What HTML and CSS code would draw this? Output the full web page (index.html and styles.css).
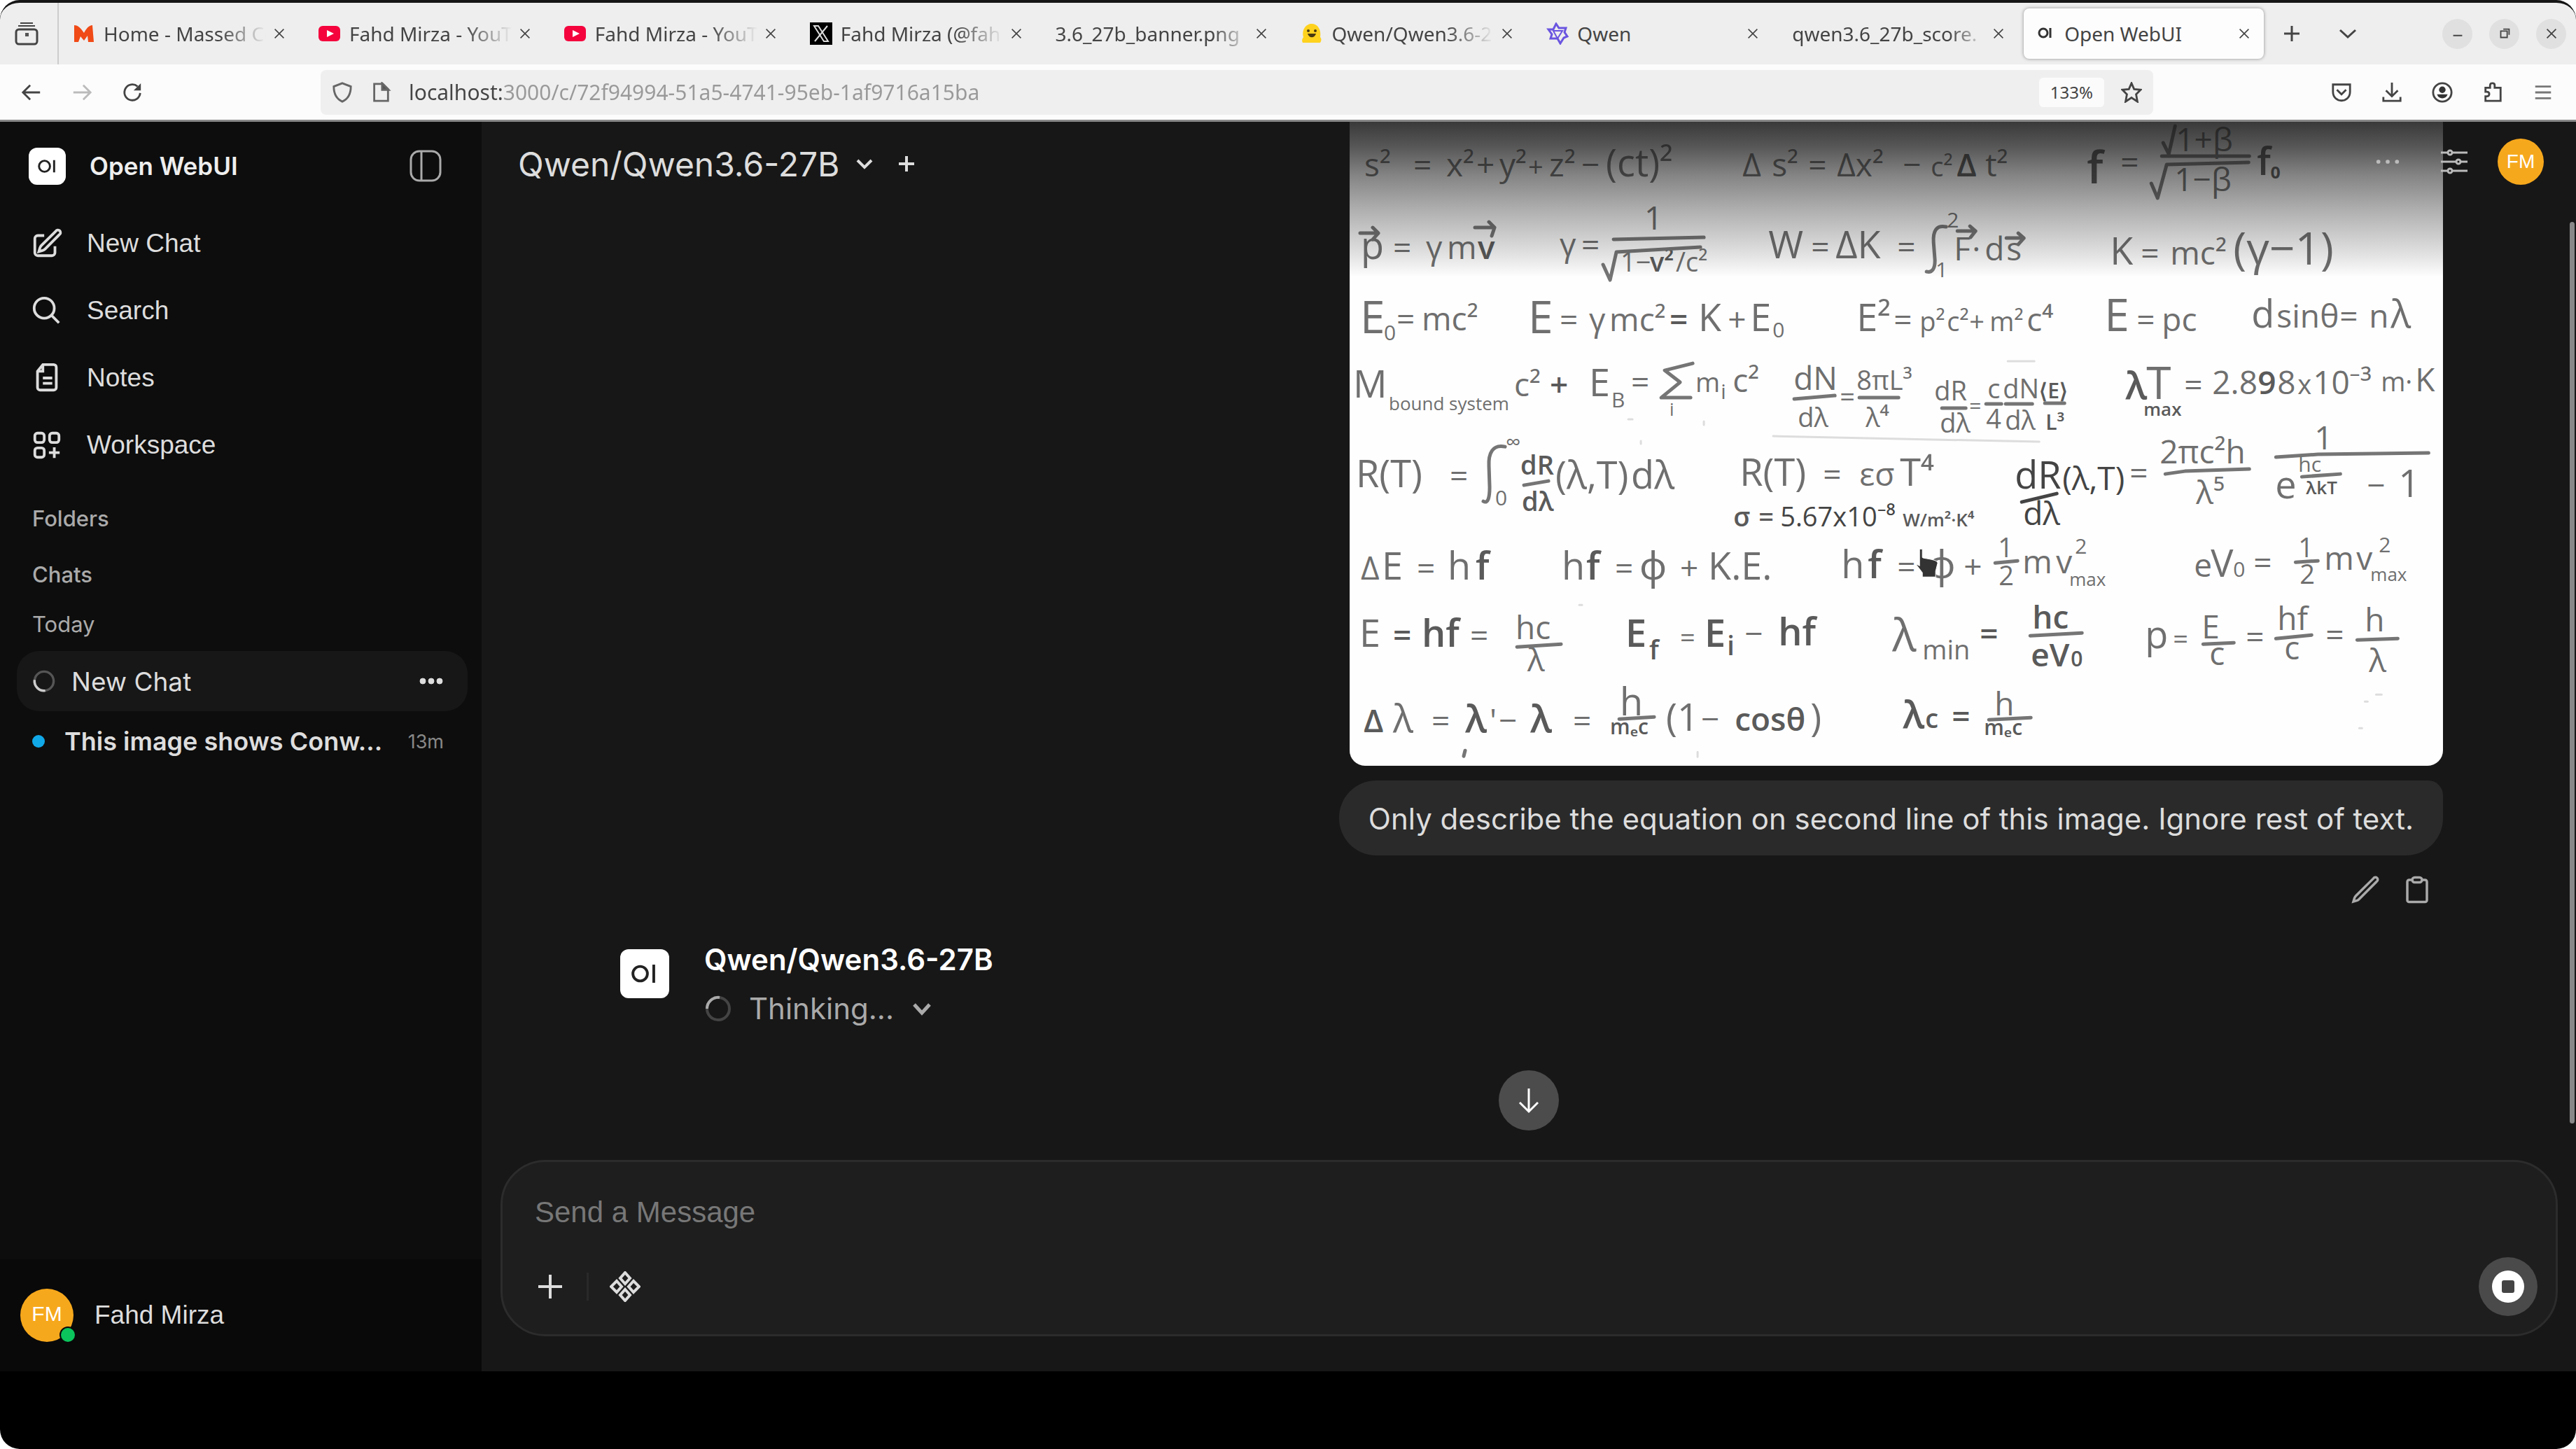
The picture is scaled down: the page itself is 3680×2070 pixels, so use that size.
FILE: index.html
```html
<!DOCTYPE html>
<html lang="en">
<head>
  <meta charset="UTF-8">
  <meta name="viewport" content="width=device-width, initial-scale=1.0">
  <title>Open WebUI</title>
  <link rel="stylesheet" href="styles.css">
</head>
<body>
  <div class="window">

    <!-- Tab strip -->
    <div class="tab-bar">
      <button class="firefox-view" aria-label="View recent browsing">
        <svg width="36" height="36" viewBox="0 0 36 36" fill="none" stroke="#555" stroke-width="3"><rect x="3" y="12" width="30" height="21" rx="4"/><path d="M6 7h24M9 3h18" stroke-width="2"/><rect x="16" y="17" width="5" height="5" fill="#555" stroke="none"/></svg>
      </button>
      <div class="tabs">
        <div class="tab">
          <svg class="favicon" viewBox="0 0 32 32"><path d="M2 4c6 0 9 4 14 11 3-6 7-11 12-11l2 24h-8l-1-9-5 7-5-6-3 8H2z" fill="#f04a16"/></svg>
          <span class="tab-title fade">Home - Massed Co</span>
          <button class="tab-close" aria-label="Close tab"><svg viewBox="0 0 20 20"><path d="M2 2l16 16M18 2L2 18"/></svg></button>
        </div>
        <div class="tab">
          <svg class="favicon" viewBox="0 0 32 32"><rect y="5" width="31" height="22" rx="6" fill="#f4033d"/><path d="M12 11l10 5-10 5z" fill="#fff"/></svg>
          <span class="tab-title fade">Fahd Mirza - YouT</span>
          <button class="tab-close" aria-label="Close tab"><svg viewBox="0 0 20 20"><path d="M2 2l16 16M18 2L2 18"/></svg></button>
        </div>
        <div class="tab">
          <svg class="favicon" viewBox="0 0 32 32"><rect y="5" width="31" height="22" rx="6" fill="#f4033d"/><path d="M12 11l10 5-10 5z" fill="#fff"/></svg>
          <span class="tab-title fade">Fahd Mirza - YouT</span>
          <button class="tab-close" aria-label="Close tab"><svg viewBox="0 0 20 20"><path d="M2 2l16 16M18 2L2 18"/></svg></button>
        </div>
        <div class="tab">
          <svg class="favicon" viewBox="0 0 32 32"><rect width="32" height="32" fill="#000"/><path d="M6 5h6l14 22h-6zM25 5L7 27" fill="none" stroke="#ddd" stroke-width="2"/></svg>
          <span class="tab-title fade">Fahd Mirza (@fah</span>
          <button class="tab-close" aria-label="Close tab"><svg viewBox="0 0 20 20"><path d="M2 2l16 16M18 2L2 18"/></svg></button>
        </div>
        <div class="tab">
          <span class="tab-title fade late">3.6_27b_banner.png</span>
          <button class="tab-close" aria-label="Close tab"><svg viewBox="0 0 20 20"><path d="M2 2l16 16M18 2L2 18"/></svg></button>
        </div>
        <div class="tab">
          <svg class="favicon" viewBox="0 0 32 32"><path d="M3 29c-2-4 0-6 1-8C1 10 8 2 16 2s14 8 12 19c2 2 2 5 0 8z" fill="#ffd21e"/><path d="M10 16c2 7 10 7 12 0z" fill="#4a3a10"/><circle cx="11" cy="12" r="2" fill="#4a3a10"/><circle cx="21" cy="12" r="2" fill="#4a3a10"/></svg>
          <span class="tab-title fade">Qwen/Qwen3.6-2</span>
          <button class="tab-close" aria-label="Close tab"><svg viewBox="0 0 20 20"><path d="M2 2l16 16M18 2L2 18"/></svg></button>
        </div>
        <div class="tab">
          <svg class="favicon" viewBox="0 0 32 32"><g fill="none" stroke="#6a55e0" stroke-width="3"><path d="M14 2l4 6h10l-2 6 4 6-5 2-5 8-4-7H6l2-6-5-7h7z"/><path d="M10 12h13l-7 11zM10 12l6 11" stroke-width="2"/></g></svg>
          <span class="tab-title">Qwen</span>
          <button class="tab-close" aria-label="Close tab"><svg viewBox="0 0 20 20"><path d="M2 2l16 16M18 2L2 18"/></svg></button>
        </div>
        <div class="tab">
          <span class="tab-title fade late">qwen3.6_27b_score.</span>
          <button class="tab-close" aria-label="Close tab"><svg viewBox="0 0 20 20"><path d="M2 2l16 16M18 2L2 18"/></svg></button>
        </div>
        <div class="tab active">
          <svg class="favicon small" viewBox="0 0 26 32"><g fill="none" stroke="#333" stroke-width="3"><circle cx="8" cy="15" r="6"/><path d="M18 8v14"/></g></svg>
          <span class="tab-title">Open WebUI</span>
          <button class="tab-close" aria-label="Close tab"><svg viewBox="0 0 20 20"><path d="M2 2l16 16M18 2L2 18"/></svg></button>
        </div>
      </div>
      <button class="strip-button" aria-label="New tab"><svg viewBox="0 0 28 28"><path d="M14 3v22M3 14h22"/></svg></button>
      <button class="strip-button" aria-label="List all tabs"><svg viewBox="0 0 28 28"><path d="M3 9l11 10L25 9"/></svg></button>
      <div class="window-controls">
        <button aria-label="Minimize"><svg viewBox="0 0 24 24"><path d="M5 15h14"/></svg></button>
        <button aria-label="Restore"><svg viewBox="0 0 24 24"><path d="M6 8h10v10H6zM10 5h9v9"/></svg></button>
        <button aria-label="Close"><svg viewBox="0 0 24 24"><path d="M5 5l14 14M19 5L5 19"/></svg></button>
      </div>
    </div>

    <!-- Navigation toolbar -->
    <div class="toolbar">
      <div class="history">
        <button aria-label="Back"><svg viewBox="0 0 32 32"><path d="M29 16H4M14 5L3 16l11 11"/></svg></button>
        <button class="disabled" aria-label="Forward" disabled><svg viewBox="0 0 32 32"><path d="M3 16h25M18 5l11 11-11 11"/></svg></button>
        <button aria-label="Reload"><svg viewBox="0 0 32 32"><path d="M28 17a12 12 0 1 1-4-10"/><path d="M29 2v11H18z" fill="#444" stroke="none"/></svg></button>
      </div>
      <div class="url-bar">
        <svg class="url-icon" viewBox="0 0 32 32"><path d="M16 2l13 5c0 11-4 19-13 23C7 26 3 18 3 7z"/></svg>
        <svg class="url-icon" viewBox="0 0 32 32"><path d="M6 3h13l8 8v18H6z"/><path d="M18 2v10h10z" fill="#555"/></svg>
        <input class="url-input" type="text" aria-label="Address" value="localhost:3000/c/72f94994-51a5-4741-95eb-1af9716a15ba">
        <button class="zoom-level">133%</button>
        <button class="star" aria-label="Bookmark this page"><svg viewBox="0 0 32 32"><path d="M16 2l4 9 10 1-7 7 2 11-9-6-9 6 2-11-7-7 10-1z"/></svg></button>
      </div>
      <div class="extensions">
        <button aria-label="Save to Pocket"><svg viewBox="0 0 32 32"><path d="M3 4h26v11c0 18-26 18-26 0zM9 12l7 7 7-7"/></svg></button>
        <button aria-label="Downloads"><svg viewBox="0 0 32 32"><path d="M16 1v20M7 13l9 9 9-9M3 23v6h26v-6"/></svg></button>
        <button aria-label="Account"><svg viewBox="0 0 32 32"><circle cx="16" cy="16" r="14"/><circle cx="16" cy="12" r="5" fill="#333" stroke="none"/><path d="M8 19h16c-2 8-14 8-16 0z" fill="#333" stroke="none"/></svg></button>
        <button aria-label="Extensions"><svg viewBox="0 0 32 32"><path d="M5 9h7V5c0-4 7-4 7 0v4h9v20H5v-7h2c5 0 5-7 0-7H5z"/></svg></button>
        <button class="menu-button" aria-label="Menu"><svg viewBox="0 0 32 32"><path d="M4 7h24M4 16h24M4 25h24"/></svg></button>
      </div>
    </div>

    <div class="app">
      <!-- Sidebar -->
      <aside class="sidebar">
        <div class="sidebar-header">
          <span class="logo"><svg viewBox="0 0 54 54"><circle cx="23" cy="27" r="8"/><path d="M37 18v18"/></svg></span>
          <span class="brand">Open WebUI</span>
          <button class="toggle" aria-label="Toggle sidebar"><svg viewBox="0 0 48 48"><rect x="3" y="3" width="42" height="42" rx="12"/><path d="M18 3v42"/></svg></button>
        </div>

        <nav class="menu">
          <a href="#"><svg viewBox="0 0 24 24"><path d="M16.9 4.5l1.7-1.7a1.9 1.9 0 1 1 2.6 2.6L10.6 16.1a4.5 4.5 0 0 1-1.9 1.1L6 18l.8-2.7a4.5 4.5 0 0 1 1.1-1.9zM18 14v4.8a2.2 2.2 0 0 1-2.2 2.2H5.2A2.2 2.2 0 0 1 3 18.8V8.2A2.2 2.2 0 0 1 5.2 6H10"/></svg>New Chat</a>
          <a href="#"><svg viewBox="0 0 24 24"><circle cx="10" cy="10" r="7.500"/><path d="M15.500 15.500L21 21"/></svg>Search</a>
          <a href="#"><svg viewBox="0 0 24 24"><path d="M9 2h8a2 2 0 0 1 2 2v15a2 2 0 0 1-2 2H7a2 2 0 0 1-2-2V7zM9 2v5H5M9 12h7M9 16h7"/></svg>Notes</a>
          <a href="#"><svg viewBox="0 0 24 24"><rect x="3" y="3" width="7" height="7" rx="2"/><rect x="14" y="3" width="7" height="7" rx="2"/><rect x="3" y="14" width="7" height="7" rx="2"/><path d="M17.500 13.500v8M13.500 17.500h8"/></svg>Workspace</a>
        </nav>

        <h2 class="section-title">Folders</h2>
        <h2 class="section-title">Chats</h2>
        <h3 class="section-day">Today</h3>
        <div class="chat-list">
          <div class="chat-item selected">
            <svg class="spinner" viewBox="0 0 40 40"><circle cx="20" cy="20" r="16" stroke="#555"/><path d="M4 18a16 16 0 0 0 18 18" stroke="#ccc"/></svg>
            <a href="#">New Chat</a>
            <button aria-label="Chat menu"><svg viewBox="0 0 36 12"><circle cx="6" cy="6" r="4"/><circle cx="18" cy="6" r="4"/><circle cx="30" cy="6" r="4"/></svg></button>
          </div>
          <div class="chat-item unread">
            <span class="unread-dot"></span>
            <a href="#">This image shows Conw...</a>
            <time>13m</time>
          </div>
        </div>

        <button class="user">
          <span class="avatar large">FM<span class="online"></span></span>
          Fahd Mirza
        </button>
      </aside>

      <!-- Conversation -->
      <main class="main">
        <header class="chat-header">
          <button class="model">Qwen/Qwen3.6-27B
            <svg viewBox="0 0 28 28"><path d="M4 9l10 10L24 9"/></svg>
          </button>
          <button class="add-model" aria-label="Add model"><svg viewBox="0 0 28 28"><path d="M14 3v22M3 14h22"/></svg></button>
          <div class="header-actions">
            <button aria-label="More"><svg viewBox="0 0 40 40" class="dots"><circle cx="6" cy="20" r="3"/><circle cx="20" cy="20" r="3"/><circle cx="34" cy="20" r="3"/></svg></button>
            <button aria-label="Controls"><svg viewBox="0 0 40 40"><path d="M1 7h10M17 7h22M1 20h22M29 20h10M1 33h10M17 33h22"/><circle cx="14" cy="7" r="3"/><circle cx="26" cy="20" r="3"/><circle cx="14" cy="33" r="3"/></svg></button>
            <button class="avatar" aria-label="User menu">FM</button>
          </div>
        </header>

        <section class="conversation">
          <div class="message user-message">
            <svg class="attachment" viewBox="0 0 1562 920" role="img" aria-label="Handwritten equations">
              <rect width="1562" height="920" fill="#fefefe"/>

              <!-- interval, doppler shift -->
              <g class="eq">
                <text y="78"><tspan x="21">s²</tspan><tspan x="91">=</tspan><tspan x="138">x²</tspan><tspan x="181">+</tspan><tspan x="214">y²</tspan><tspan x="255" class="m">+</tspan><tspan x="285">z²</tspan><tspan x="331">−</tspan><tspan x="366" class="l">(ct)²</tspan></text>
                <text y="78"><tspan x="561">Δ</tspan><tspan x="603">s²</tspan><tspan x="655">=</tspan><tspan x="696">Δx²</tspan><tspan x="790">−</tspan><tspan x="830" class="m">c²</tspan><tspan x="867" class="b">Δ</tspan><tspan x="908">t²</tspan></text>
                <text y="88" x="1053" class="xl b">f</text>
                <text y="74" x="1101">=</text>
                <text y="42" x="1180">1+β</text>
                <text y="99" x="1178">1−β</text>
                <text y="76" x="1296" class="l b">f<tspan class="m">₀</tspan></text>
                <path d="M1162 30l8 16 9-40M1160 49h125M1145 88l9 21 13-48 117-3"/>
              </g>

              <!-- momentum, work, kinetic energy -->
              <g class="eq">
                <text y="196"><tspan x="16" class="l">p</tspan><tspan x="62">=</tspan><tspan x="109">γ</tspan><tspan x="139">m</tspan><tspan x="183" class="b">v</tspan></text>
                <path d="M15 159h26l-8-8m8 8l-8 9M179 151h28l-8-8m8 8l-4 12"/>
                <text y="192"><tspan x="300">γ</tspan><tspan x="331">=</tspan><tspan x="421" dy="-38">1</tspan></text>
                <text y="214"><tspan x="387" class="m">1−</tspan><tspan x="429" class="m b">v²</tspan><tspan x="466" class="m">/c²</tspan></text>
                <path d="M377 168l129-3M362 204l10 22 9-40 120-7"/>
                <text y="195"><tspan x="598" class="l">W</tspan><tspan x="659">=</tspan><tspan x="694" class="l">ΔK</tspan><tspan x="782">=</tspan></text>
                <path d="M852 150c-14-3-19 6-18 22l2 26c0 12-4 18-12 16"/>
                <text y="151" x="853" class="s">2</text><text y="222" x="837" class="s">1</text>
                <text y="198"><tspan x="863">F</tspan><tspan x="889">·</tspan><tspan x="907">d</tspan><tspan x="938">s</tspan></text>
                <path d="M868 156h26l-8-7m8 7l-7 9M938 166h25l-8-7m8 7l-8 9"/>
                <text y="204"><tspan x="1086" class="l">K</tspan><tspan x="1130">=</tspan><tspan x="1172">mc²</tspan><tspan x="1262" class="xl">(γ−1)</tspan></text>
              </g>

              <!-- rest energy -->
              <g class="eq">
                <text y="302"><tspan x="15" class="xl">E</tspan><tspan x="49" dy="10" class="s">0</tspan><tspan x="67" dy="-14">=</tspan><tspan x="103">mc²</tspan></text>
                <text y="302"><tspan x="255" class="xl">E</tspan><tspan x="300" dy="-3">=</tspan><tspan x="342">γ</tspan><tspan x="371">mc²</tspan><tspan x="457" class="b">=</tspan><tspan x="498" class="l">K</tspan><tspan x="540">+</tspan><tspan x="572" class="l">E</tspan><tspan x="604" dy="9" class="s">0</tspan></text>
                <text y="299"><tspan x="724" class="l">E²</tspan><tspan x="777">=</tspan><tspan x="814" class="m">p²</tspan><tspan x="853" class="m">c²</tspan><tspan x="885" class="m">+</tspan><tspan x="914" class="m">m²</tspan><tspan x="967">c⁴</tspan></text>
                <text y="299"><tspan x="1078" class="xl">E</tspan><tspan x="1124">=</tspan><tspan x="1160">pc</tspan></text>
                <text y="294"><tspan x="1288" class="l">d</tspan><tspan x="1324">sin</tspan><tspan x="1386">θ</tspan><tspan x="1414">=</tspan><tspan x="1456">n</tspan><tspan x="1487" class="l">λ</tspan></text>
              </g>

              <!-- binding energy, radiation -->
              <g class="eq">
                <text y="394"><tspan x="5" class="l">M</tspan><tspan x="56" dy="18" class="xs">bound system</tspan><tspan x="235" dy="-20">c²</tspan><tspan x="286" class="b">+</tspan><tspan x="342" class="l">E</tspan><tspan x="374" dy="16" class="s">B</tspan><tspan x="402" dy="-20">=</tspan></text>
                <path d="M490 345l-40 10 22 17-27 22h42"/>
                <text y="386"><tspan x="494" class="m">m</tspan><tspan x="530" dy="10" class="s">i</tspan><tspan x="547" dy="-10">c²</tspan><tspan x="457" dy="34" class="xs">i</tspan></text>
                <text y="383"><tspan x="634">dN</tspan><tspan x="724" class="m">8πL³</tspan></text>
                <text y="436"><tspan x="640" class="m">dλ</tspan><tspan x="737" class="m">λ⁴</tspan><tspan x="700" dy="-30" class="m">=</tspan></text>
                <path d="M635 396l58-5M728 394h56"/>
                <text y="398"><tspan x="835" class="m">dR</tspan><tspan x="911" dy="-3" class="m">c</tspan><tspan x="933" class="m">dN</tspan><tspan x="985" class="s b">⟨E⟩</tspan></text>
                <text y="444"><tspan x="843" class="m">dλ</tspan><tspan x="909" dy="-6" class="m">4</tspan><tspan x="936" dy="2" class="m">dλ</tspan><tspan x="994" class="s b">L³</tspan><tspan x="885" dy="-24" class="s">=</tspan></text>
                <path d="M846 409h34M909 403h22M937 403h38M993 402h28"/>
                <text y="396"><tspan x="1108" class="l b">λ</tspan><tspan x="1138" class="xl">T</tspan><tspan x="1134" dy="24" class="xs b">max</tspan><tspan x="1192" dy="-28">=</tspan></text>
                <text y="389"><tspan x="1232">2.8</tspan><tspan x="1297" class="b">9</tspan><tspan x="1325">8</tspan><tspan x="1354" class="m">x</tspan><tspan x="1376">10</tspan><tspan x="1428">⁻³</tspan><tspan x="1473" dy="-4" class="m">m</tspan><tspan x="1508" class="m">·</tspan><tspan x="1522">K</tspan></text>
                <path class="faint" d="M605 449l380 8M940 342h38"/>
              </g>

              <!-- total radiance -->
              <g class="eq">
                <text y="522"><tspan x="9" class="l">R(T)</tspan><tspan x="143">=</tspan></text>
                <path d="M222 464c-18-4-24 10-23 28l1 30c0 14-2 24-9 20"/>
                <text y="468" x="223" class="s">∞</text><text y="548" x="208" class="s">0</text>
                <text y="504" x="244" class="m b">dR</text><text y="556" x="246" class="m b">dλ</text>
                <path d="M249 519l35-6"/>
                <text y="524"><tspan x="294" class="l">(λ,T)</tspan><tspan x="402" class="l">dλ</tspan></text>
                <text y="520"><tspan x="557" class="l">R(T)</tspan><tspan x="676">=</tspan><tspan x="728">εσ</tspan><tspan x="786" class="l">T⁴</tspan></text>
                <text y="578"><tspan x="548" class="m b">σ</tspan><tspan x="584" class="m b">=</tspan><tspan x="615" class="m strong">5.67x10⁻⁸</tspan><tspan x="790" class="xs b">W/m²·K⁴</tspan></text>
                <g class="dark">
                  <text y="524" x="950" class="l">dR</text><text y="576" x="962">dλ</text>
                  <text y="526" x="1018">(λ,T)</text>
                  <path d="M960 543l50-12"/>
                </g>
                <text y="518"><tspan x="1114">=</tspan><tspan x="1157" dy="-30">2πc²h</tspan><tspan x="1209" dy="58">λ⁵</tspan></text>
                <path d="M1165 503l28-4 92-3M1323 479l60-4 158-2"/>
                <text y="468" x="1378">1</text>
                <text y="538"><tspan x="1322" class="l">e</tspan><tspan x="1355" dy="-38" class="s">hc</tspan><tspan x="1366" dy="32" class="xs b">λkT</tspan><tspan x="1453" dy="4">−</tspan><tspan x="1498" class="l">1</tspan></text>
                <path d="M1360 507l55-4"/>
              </g>

              <!-- photoelectric effect -->
              <g class="eq">
                <text y="654"><tspan x="16">Δ</tspan><tspan x="46" class="l">E</tspan><tspan x="96">=</tspan><tspan x="140" class="l">h</tspan><tspan x="180" class="l b">f</tspan></text>
                <text y="654"><tspan x="303" class="l">h</tspan><tspan x="338" class="l b">f</tspan><tspan x="379">=</tspan><tspan x="414" class="l">ϕ</tspan><tspan x="472">+</tspan><tspan x="512" class="l">K.E.</tspan></text>
                <text y="652"><tspan x="702" class="l">h</tspan><tspan x="740" class="l b">f</tspan><tspan x="782">=</tspan><tspan x="826" class="l">ϕ</tspan><tspan x="877">+</tspan></text>
                <text y="622" x="926" class="m">1</text><text y="662" x="927" class="m">2</text>
                <text y="645"><tspan x="961">m</tspan><tspan x="1009">v</tspan><tspan x="1036" dy="-28" class="s">2</tspan><tspan x="1028" dy="46" class="xs">max</tspan></text>
                <text y="650"><tspan x="1206">e</tspan><tspan x="1230" class="l">V</tspan><tspan x="1262" class="s">0</tspan><tspan x="1291" dy="-4">=</tspan></text>
                <text y="622" x="1355" class="m">1</text><text y="660" x="1357" class="m">2</text>
                <text y="640"><tspan x="1392">m</tspan><tspan x="1438">v</tspan><tspan x="1470" dy="-25" class="s">2</tspan><tspan x="1458" dy="41" class="xs">max</tspan></text>
                <path d="M922 630l32-3M1351 629l32-2"/>
              </g>

              <!-- photon energy and momentum -->
              <g class="eq">
                <text y="750"><tspan x="14" class="l">E</tspan><tspan x="62" class="b">=</tspan><tspan x="103" class="l b">hf</tspan><tspan x="172">=</tspan><tspan x="237" dy="-11">hc</tspan><tspan x="254" dy="46">λ</tspan></text>
                <text y="750"><tspan x="394" class="l b">E</tspan><tspan x="428" dy="18" class="m b">f</tspan><tspan x="472" dy="-18" class="m">=</tspan><tspan x="507" class="l b">E</tspan><tspan x="539" dy="12" class="m b">i</tspan><tspan x="564" dy="-14">−</tspan><tspan x="612" class="l b">hf</tspan></text>
                <text y="756"><tspan x="775" class="xl">λ</tspan><tspan x="818" dy="12" class="m">min</tspan><tspan x="900" dy="-20" class="b">=</tspan><tspan x="975" dy="-24" class="b">hc</tspan><tspan x="973" dy="54" class="b">eV</tspan><tspan x="1030" class="s b">0</tspan></text>
                <text y="752"><tspan x="1136" class="l">p</tspan><tspan x="1176" class="m">=</tspan><tspan x="1217" dy="-14">E</tspan><tspan x="1228" dy="38">c</tspan><tspan x="1280" dy="-24">=</tspan><tspan x="1325" dy="-26">hf</tspan><tspan x="1335" dy="42">c</tspan><tspan x="1394" dy="-19">=</tspan><tspan x="1450" dy="-21">h</tspan><tspan x="1456" dy="58">λ</tspan></text>
                <path d="M239 750l63-4M972 734l74-4M1219 746l44-2M1323 738l51-5M1439 740l58-2"/>
              </g>

              <!-- compton shift -->
              <g class="eq">
                <text y="872"><tspan x="20" class="b">Δ</tspan><tspan x="62" class="l">λ</tspan><tspan x="117">=</tspan><tspan x="165" class="l b">λ</tspan><tspan x="200">'</tspan><tspan x="213">−</tspan><tspan x="258" class="l b">λ</tspan><tspan x="319">=</tspan><tspan x="386" dy="-24" class="l">h</tspan><tspan x="372" dy="27" class="s b">mₑc</tspan></text>
                <text y="870"><tspan x="452" class="l">(1</tspan><tspan x="502">−</tspan><tspan x="550" class="b">cosθ</tspan><tspan x="658" class="l">)</tspan></text>
                <text y="866"><tspan x="790" class="l b">λ</tspan><tspan x="822" class="m b">c</tspan><tspan x="860" class="b">=</tspan><tspan x="921" dy="-18">h</tspan><tspan x="906" dy="28" class="s b">mₑc</tspan></text>
                <path d="M385 853l50-3M913 854l60-3M165 898l-2 8"/>
                <path class="faint" d="M497 900v7M1466 818h8M1450 828h4M1442 866h4M398 425h6M506 428v5M416 456v4M328 690h4"/>
              </g>

              <!-- hand pointer -->
              <path d="M814 610v24l-6-3 10 13v6h19v-8l3-12c0-6-22-6-22-8v-12z" fill="#333" stroke="#fff" stroke-width="1"/>
            </svg>

            <p class="bubble">Only describe the equation on second line of this image. Ignore rest of text.</p>

            <div class="message-actions">
              <button aria-label="Edit"><svg viewBox="0 0 24 24"><path d="M16.900 4.500l1.700-1.700a1.900 1.900 0 1 1 2.600 2.600L6.800 19.800a4.500 4.500 0 0 1-1.900 1.100L2.300 21.700l.8-2.700a4.500 4.500 0 0 1 1.100-1.900z"/></svg></button>
              <button aria-label="Copy"><svg viewBox="0 0 24 24"><path d="M8 4H5.500A1.500 1.500 0 0 0 4 5.500v15A1.500 1.500 0 0 0 5.500 22h13a1.500 1.500 0 0 0 1.500-1.500v-15A1.500 1.500 0 0 0 18.500 4H16"/><rect x="8" y="2" width="8" height="4" rx="2"/></svg></button>
            </div>
          </div>

          <div class="message assistant-message">
            <span class="logo large"><svg viewBox="0 0 54 54"><circle cx="22" cy="27" r="8"/><path d="M37 17v20"/></svg></span>
            <div>
              <h4 class="sender">Qwen/Qwen3.6-27B</h4>
              <button class="thinking">
                <svg class="spinner" viewBox="0 0 40 40"><circle cx="20" cy="20" r="16" stroke="#444"/><path d="M4 20a16 16 0 0 1 18-16" stroke="#aaa"/></svg>
                Thinking...
                <svg class="chevron" viewBox="0 0 32 32"><path d="M5 10l11 12 11-12"/></svg>
              </button>
            </div>
          </div>
        </section>

        <form class="composer">
          <button type="button" class="scroll-down" aria-label="Scroll to bottom"><svg viewBox="0 0 40 40"><path d="M20 3v33M7 23l13 13 13-13"/></svg></button>
          <textarea rows="1" placeholder="Send a Message" aria-label="Send a Message"></textarea>
          <div class="composer-tools">
            <button type="button" aria-label="Add"><svg viewBox="0 0 44 44"><path d="M22 5v34M5 22h34"/></svg></button>
            <span class="separator"></span>
            <button type="button" aria-label="Integrations"><svg viewBox="0 0 44 44"><path d="M22 2l7 8-7 8-7-8zM22 26l7 8-7 8-7-8zM10 14l7 8-7 8-8-8zM34 14l8 8-8 8-7-8z"/></svg></button>
            <button type="button" class="stop" aria-label="Stop"><svg viewBox="0 0 84 84"><circle cx="42" cy="42" r="23" fill="#fff"/><rect x="33" y="33" width="18" height="18" rx="3" fill="#444"/></svg></button>
          </div>
        </form>

        <span class="scrollbar"></span>
      </main>
    </div>
  </div>
</body>
</html>
```

FILE: styles.css
```css
* {
  margin: 0;
  padding: 0;
  box-sizing: border-box;
}

body {
  background: #fff;
  font-family: Inter, sans-serif;
  color: #ddd;
}

button {
  background: none;
  border: none;
  color: inherit;
  font: inherit;
  cursor: pointer;
}

a {
  color: inherit;
  text-decoration: none;
}

svg {
  display: block;
  flex-shrink: 0;
  fill: none;
  stroke: currentColor;
}

.window {
  display: flex;
  flex-direction: column;
  height: 100vh;
  padding-bottom: 111px;
  background: #000;
  border-top: 4px solid #151515;
  border-radius: 28px;
  overflow: hidden;
}

/* Tab strip */
.tab-bar {
  display: flex;
  align-items: center;
  height: 88px;
  flex-shrink: 0;
  background: #eee;
  color: #444;
  font-family: "Noto Sans", sans-serif;
  font-size: 28px;
}

.firefox-view {
  align-self: stretch;
  width: 84px;
  padding: 0 20px;
  flex-shrink: 0;
  border-right: 2px solid #ccc;
}

.tabs {
  display: flex;
  gap: 8px;
  flex: 0 1 3150px;
  min-width: 0;
}

.tab {
  display: flex;
  align-items: center;
  flex: 1 1 0;
  min-width: 0;
  height: 72px;
  padding: 0 14px 0 20px;
  border-radius: 8px;
}

.tab.active {
  background: #fdfdfd;
  box-shadow: 0 0 5px rgba(0, 0, 0, 0.4);
}

.favicon {
  width: 32px;
  height: 32px;
  margin-right: 12px;
  stroke: none;
}

.favicon.small {
  width: 26px;
}

.tab-title {
  flex: 1;
  min-width: 0;
  overflow: hidden;
  white-space: nowrap;
}

.fade {
  mask-image: linear-gradient(to right, #000 70%, transparent 98%);
}

.fade.late {
  mask-image: linear-gradient(to right, #000 80%, transparent 99%);
}

.tab-close {
  padding: 6px;
}

.tab-close svg {
  width: 16px;
  height: 16px;
  stroke-width: 2;
}

.strip-button {
  width: 80px;
  padding: 0 26px;
}

.strip-button svg {
  width: 28px;
  height: 28px;
  stroke-width: 3;
}

.window-controls {
  display: flex;
  gap: 24px;
  margin-left: auto;
  padding-right: 14px;
}

.window-controls button {
  display: flex;
  align-items: center;
  justify-content: center;
  width: 43px;
  height: 43px;
  border-radius: 50%;
  background: #e0e0e0;
}

.window-controls svg {
  width: 22px;
  height: 22px;
  stroke-width: 2;
}

/* Toolbar */
.toolbar {
  display: flex;
  align-items: center;
  height: 82px;
  flex-shrink: 0;
  background: #fcfcfc;
  border-bottom: 3px solid #888;
  color: #444;
  font-family: "Noto Sans", sans-serif;
}

.toolbar svg {
  width: 30px;
  height: 30px;
  stroke-width: 3;
}

.history {
  display: flex;
  gap: 42px;
  width: 458px;
  padding-left: 30px;
  flex-shrink: 0;
}

.history .disabled {
  color: #bbb;
}

.url-bar {
  display: flex;
  align-items: center;
  flex: 1;
  height: 64px;
  padding: 0 16px;
  border-radius: 8px;
  background: #efefef;
}

.url-icon {
  margin-right: 25px;
  color: #666;
}

.url-input {
  flex: 1;
  min-width: 0;
  border: none;
  outline: none;
  font-family: inherit;
  font-size: 30px;
  /* host is darker than the rest of the address */
  color: transparent;
  background: linear-gradient(to right, #444 134px, #999 134px);
  background-clip: text;
}

.zoom-level {
  padding: 0 16px;
  margin-right: 24px;
  border-radius: 6px;
  background: #fbfbfb;
  font-size: 24px;
  line-height: 42px;
}

.extensions {
  display: flex;
  gap: 42px;
  padding: 0 32px 0 254px;
}

.menu-button {
  color: #777;
}

/* App */
.app {
  display: flex;
  flex: 1;
  min-height: 0;
}

.sidebar {
  display: flex;
  flex-direction: column;
  width: 688px;
  flex-shrink: 0;
  background: #0d0d0d;
}

.sidebar-header {
  display: flex;
  align-items: center;
  gap: 34px;
  height: 126px;
  padding: 0 56px 0 41px;
}

.logo {
  width: 53px;
  height: 53px;
  border-radius: 12px;
  background: #fff;
  color: #222;
  flex-shrink: 0;
}

.logo svg {
  stroke-width: 3;
}

.logo.large {
  width: 70px;
  height: 70px;
}

.brand {
  flex: 1;
  font-size: 35px;
  font-weight: 600;
  color: #eee;
}

.toggle {
  color: #aaa;
}

.toggle svg {
  width: 48px;
  height: 48px;
  stroke-width: 3;
}

.menu {
  margin-bottom: 17px;
  font-family: "Liberation Sans", sans-serif;
  font-size: 37px;
}

.menu a {
  display: flex;
  align-items: center;
  gap: 34px;
  height: 96px;
  padding-left: 44px;
}

.menu svg {
  width: 46px;
  height: 46px;
  stroke-width: 2;
}

.section-title,
.section-day {
  padding-left: 46px;
  font-size: 31px;
  font-weight: 500;
  line-height: 80px;
  color: #aaa;
}

.section-day {
  font-weight: 400;
  line-height: 62px;
}

.chat-list {
  margin-top: 7px;
  padding: 0 20px 0 24px;
}

.chat-item {
  display: flex;
  align-items: center;
  height: 86px;
  padding: 0 34px 0 22px;
  border-radius: 32px;
  font-size: 37px;
}

.chat-item.selected {
  background: #171717;
}

.chat-item a {
  flex: 1;
  min-width: 0;
  overflow: hidden;
  white-space: nowrap;
}

.chat-item button svg {
  width: 36px;
  fill: currentColor;
}

.chat-item .spinner {
  width: 34px;
  margin-right: 22px;
}

.spinner {
  width: 40px;
  stroke-width: 4;
}

.chat-item.unread {
  font-size: 36px;
  font-weight: 600;
}

.unread-dot {
  width: 18px;
  height: 18px;
  margin-right: 28px;
  border-radius: 50%;
  background: #11a8e8;
}

.chat-item time {
  margin-left: 20px;
  font-size: 27px;
  font-weight: 400;
  color: #888;
}

.user {
  display: flex;
  align-items: center;
  gap: 30px;
  height: 160px;
  margin-top: auto;
  padding-left: 29px;
  background: #090909;
  font-family: "Liberation Sans", sans-serif;
  font-size: 37px;
}

.avatar {
  position: relative;
  width: 66px;
  height: 66px;
  border-radius: 50%;
  background: #f6a81c;
  color: #fff;
  font-family: "Liberation Sans", sans-serif;
  font-size: 28px;
  line-height: 64px;
  text-align: center;
}

.avatar.large {
  width: 76px;
  height: 76px;
  font-size: 30px;
  line-height: 72px;
}

.online {
  position: absolute;
  right: -4px;
  bottom: -2px;
  width: 24px;
  height: 24px;
  border: 2px solid #090909;
  border-radius: 50%;
  background: #0bc45c;
}

/* Conversation */
.main {
  position: relative;
  display: flex;
  flex-direction: column;
  flex: 1;
  min-width: 0;
  background: #171717;
}

.chat-header {
  position: absolute;
  top: 0;
  left: 0;
  right: 0;
  display: flex;
  align-items: flex-start;
  height: 222px;
  padding: 24px 46px 0 52px;
  background: linear-gradient(to bottom, rgba(23, 23, 23, 0.85) 0, rgba(23, 23, 23, 0.72) 36px, rgba(23, 23, 23, 0.53) 76px, rgba(23, 23, 23, 0.34) 126px, rgba(23, 23, 23, 0.12) 190px, rgba(23, 23, 23, 0) 222px);
}

.model {
  display: flex;
  align-items: center;
  gap: 22px;
  height: 72px;
  font-size: 48px;
  white-space: nowrap;
}

.model svg,
.add-model svg {
  width: 28px;
  height: 28px;
  stroke-width: 4;
}

.add-model {
  height: 72px;
  padding: 0 32px;
}

.header-actions {
  display: flex;
  align-items: center;
  gap: 42px;
  margin-left: auto;
}

.header-actions svg {
  width: 40px;
  height: 40px;
  color: #bbb;
  stroke-width: 3;
}

.header-actions .dots {
  width: 38px;
  margin-right: 14px;
  fill: currentColor;
  stroke: none;
}

.conversation {
  flex: 1;
  min-height: 0;
  padding-left: 8px;
  overflow: hidden;
}

.message {
  max-width: 2604px;
  margin: 0 auto;
}

.user-message {
  display: flex;
  flex-direction: column;
  align-items: flex-end;
}

.attachment {
  width: 60%;
  border-radius: 0 0 22px 22px;
}

.bubble {
  margin-top: 21px;
  padding: 2px 42px 0;
  border-radius: 53px 21px 53px 53px;
  background: #2a2a2a;
  font-size: 42px;
  line-height: 105px;
}

.message-actions {
  display: flex;
  gap: 32px;
  padding: 28px 16px 0;
  color: #aaa;
}

.message-actions svg {
  width: 42px;
  height: 42px;
  stroke-width: 2;
}

.assistant-message {
  display: flex;
  gap: 50px;
  margin-top: 64px;
}

.sender {
  font-size: 42px;
  font-weight: 600;
  line-height: 30px;
  color: #fff;
}

.thinking {
  display: flex;
  align-items: center;
  gap: 24px;
  margin-top: 29px;
  font-size: 42px;
  color: #aaa;
}

.chevron {
  width: 32px;
  stroke-width: 5;
}

.composer {
  position: relative;
  margin: 0 26px 50px 27px;
  padding: 48px 26px 26px 46px;
  border: 3px solid #2c2c2c;
  border-radius: 64px;
  background: #1e1e1e;
}

.scroll-down {
  position: absolute;
  left: 50%;
  bottom: calc(100% + 45px);
  width: 86px;
  height: 86px;
  margin-left: -44px;
  padding: 23px;
  border-radius: 50%;
  background: #4c4c4c;
  color: #fff;
}

.scroll-down svg {
  stroke-width: 3;
}

.composer textarea {
  display: block;
  width: 100%;
  height: 48px;
  border: none;
  outline: none;
  resize: none;
  background: none;
  color: #ddd;
  font-family: "Liberation Sans", sans-serif;
  font-size: 42px;
  line-height: 48px;
}

.composer textarea::placeholder {
  color: #777;
}

.composer-tools {
  display: flex;
  align-items: center;
  margin-top: 40px;
}

.composer-tools svg {
  width: 44px;
  height: 44px;
  stroke-width: 4;
}

.separator {
  width: 3px;
  height: 40px;
  margin: 0 30px;
  background: #292929;
}

.composer-tools .stop {
  margin-left: auto;
  border-radius: 50%;
  background: #4a4a4a;
}

.composer-tools .stop svg {
  width: 84px;
  height: 84px;
  stroke: none;
}

.scrollbar {
  position: absolute;
  top: 143px;
  right: 2px;
  width: 7px;
  height: 1288px;
  border-radius: 4px;
  background: #888;
}

/* Handwritten sheet */
.eq {
  fill: #6f6f6f;
  stroke: none;
  font-family: "Open Sans", "Noto Sans", sans-serif;
  font-size: 46px;
}

.eq path {
  fill: none;
  stroke: #757575;
  stroke-width: 5;
  stroke-linecap: round;
  stroke-linejoin: round;
}

.eq .faint {
  stroke: #ddd;
  stroke-width: 3;
}

.eq .xs {
  font-size: 26px;
}

.eq .s {
  font-size: 30px;
}

.eq .m {
  font-size: 38px;
}

.eq .l {
  font-size: 54px;
}

.eq .xl {
  font-size: 64px;
}

.eq .b {
  font-weight: 600;
  fill: #5a5a5a;
}

.eq .strong {
  fill: #444;
}

.eq .dark {
  fill: #444;
}

.eq .dark path {
  stroke: #444;
}
```
